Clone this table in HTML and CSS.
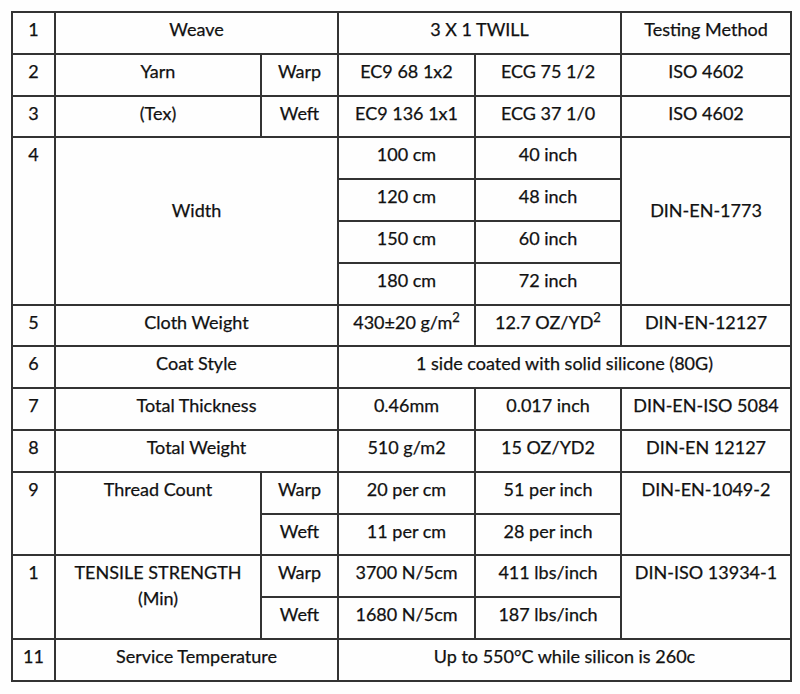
FILE: index.html
```html
<!DOCTYPE html>
<html>
<head>
<meta charset="utf-8">
<link rel="stylesheet" href="styles.css">
</head>
<body>
<table class="spec">
  <colgroup>
    <col class="c-no"><col class="c-name"><col class="c-dir"><col class="c-v1"><col class="c-v2"><col class="c-test">
  </colgroup>
  <tr><td>1</td><td colspan="2">Weave</td><td colspan="2">3 X 1 TWILL</td><td>Testing Method</td></tr>
  <tr><td>2</td><td>Yarn</td><td>Warp</td><td>EC9 68 1x2</td><td>ECG 75 1/2</td><td>ISO 4602</td></tr>
  <tr><td>3</td><td>(Tex)</td><td>Weft</td><td>EC9 136 1x1</td><td>ECG 37 1/0</td><td>ISO 4602</td></tr>
  <tr><td rowspan="4">4</td><td colspan="2" rowspan="4" class="mid">Width</td><td>100 cm</td><td>40 inch</td><td rowspan="4" class="mid">DIN-EN-1773</td></tr>
  <tr><td>120 cm</td><td>48 inch</td></tr>
  <tr><td>150 cm</td><td>60 inch</td></tr>
  <tr><td>180 cm</td><td>72 inch</td></tr>
  <tr><td>5</td><td colspan="2">Cloth Weight</td><td>430±20 g/m<sup>2</sup></td><td>12.7 OZ/YD<sup>2</sup></td><td>DIN-EN-12127</td></tr>
  <tr><td>6</td><td colspan="2">Coat Style</td><td colspan="3">1 side coated with solid silicone (80G)</td></tr>
  <tr><td>7</td><td colspan="2">Total Thickness</td><td>0.46mm</td><td>0.017 inch</td><td>DIN-EN-ISO 5084</td></tr>
  <tr><td>8</td><td colspan="2">Total Weight</td><td>510 g/m2</td><td>15 OZ/YD2</td><td>DIN-EN 12127</td></tr>
  <tr><td rowspan="2">9</td><td rowspan="2">Thread Count</td><td>Warp</td><td>20 per cm</td><td>51 per inch</td><td rowspan="2">DIN-EN-1049-2</td></tr>
  <tr><td>Weft</td><td>11 per cm</td><td>28 per inch</td></tr>
  <tr><td rowspan="2">1</td><td rowspan="2">TENSILE STRENGTH<br>(Min)</td><td>Warp</td><td>3700 N/5cm</td><td>411 lbs/inch</td><td rowspan="2">DIN-ISO 13934-1</td></tr>
  <tr><td>Weft</td><td>1680 N/5cm</td><td>187 lbs/inch</td></tr>
  <tr><td>11</td><td colspan="2">Service Temperature</td><td colspan="3">Up to 550°C while silicon is 260c</td></tr>
</table>
</body>
</html>
```
FILE: styles.css
```css
html, body {
  margin: 0;
  padding: 0;
  background: #fefefe;
}
body {
  padding: 11px 0 0 11px;
  font-family: Lato, "Open Sans", sans-serif;
  color: #111;
}
.spec {
  border-collapse: collapse;
  table-layout: fixed;
  width: 781px;
}
.c-no { width: 43px; }
.c-name { width: 206px; }
.c-dir { width: 77px; }
.c-v1 { width: 137px; }
.c-v2 { width: 146px; }
.c-test { width: 170px; }
.spec tr { height: 41.8px; }
.spec td {
  border: 2px solid #333;
  text-align: center;
  vertical-align: top;
  font-size: 18px;
  line-height: 26px;
  padding: 3px 2px 0;
  white-space: nowrap;
  -webkit-text-stroke: 0.25px #111;
}
.spec td.mid {
  vertical-align: middle;
  padding-bottom: 25px;
}
.spec sup {
  font-size: 13px;
  line-height: 0;
  vertical-align: 7px;
}
```
